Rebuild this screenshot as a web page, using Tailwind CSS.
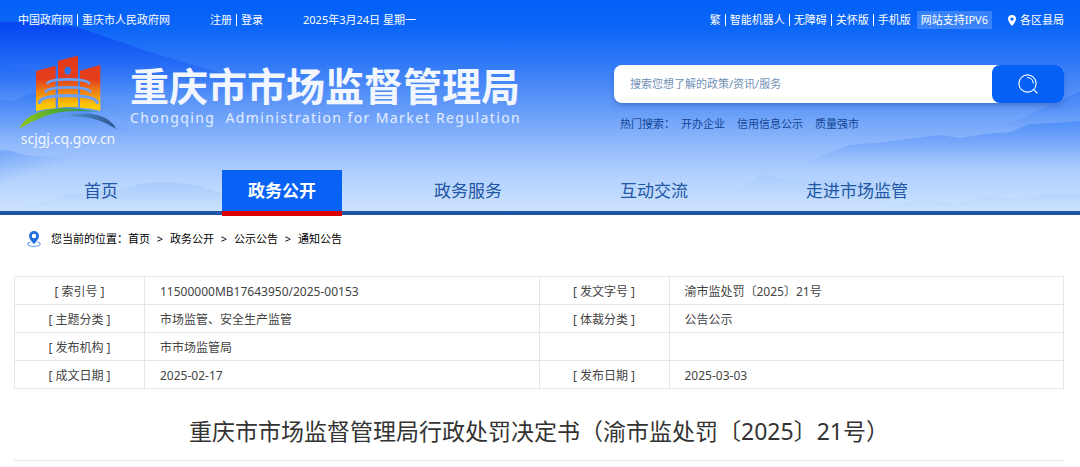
<!DOCTYPE html>
<html lang="zh-CN">
<head>
<meta charset="utf-8">
<meta name="viewport" content="width=device-width, initial-scale=1">
<title>重庆市市场监督管理局行政处罚决定书</title>
<script src="https://cdn.jsdelivr.net/npm/@tailwindcss/browser@4"></script>
</head>
<body class="bg-white font-['Noto_Sans','Noto_Sans_CJK_SC',sans-serif] text-[#333]">

<header class="relative border-b-4 border-[#1f55a5]">
  <!-- sky and mountain ridges -->
  <svg class="absolute inset-0 h-full w-full" viewBox="0 0 1080 211" preserveAspectRatio="none" aria-hidden="true">
    <defs>
      <linearGradient id="sky" x1="0" y1="0" x2="0" y2="1">
        <stop offset="0" stop-color="#005ff7"/>
        <stop offset=".14" stop-color="#0d67f7"/>
        <stop offset=".3" stop-color="#3079f6"/>
        <stop offset=".5" stop-color="#6199f8"/>
        <stop offset=".7" stop-color="#94bbfb"/>
        <stop offset=".85" stop-color="#b5d3fe"/>
        <stop offset="1" stop-color="#cde3ff"/>
      </linearGradient>
      <linearGradient id="ridgeA" x1="0" y1="22" x2="0" y2="100" gradientUnits="userSpaceOnUse">
        <stop offset="0" stop-color="#0537ee" stop-opacity=".7"/>
        <stop offset="1" stop-color="#1a62f5" stop-opacity="0"/>
      </linearGradient>
      <linearGradient id="ridgeB" x1="0" y1="64" x2="0" y2="115" gradientUnits="userSpaceOnUse">
        <stop offset="0" stop-color="#1460f5" stop-opacity=".3"/>
        <stop offset="1" stop-color="#1460f5" stop-opacity="0"/>
      </linearGradient>
      <linearGradient id="ridgeC" x1="0" y1="92" x2="0" y2="138" gradientUnits="userSpaceOnUse">
        <stop offset="0" stop-color="#1d6bf5" stop-opacity=".35"/>
        <stop offset="1" stop-color="#1d6bf5" stop-opacity="0"/>
      </linearGradient>
      <linearGradient id="ridgeD" x1="0" y1="150" x2="12" y2="182" gradientUnits="userSpaceOnUse">
        <stop offset="0" stop-color="#3d85f5" stop-opacity=".38"/>
        <stop offset="1" stop-color="#3d85f5" stop-opacity="0"/>
      </linearGradient>
      <linearGradient id="ridgeE" x1="0" y1="182" x2="0" y2="211" gradientUnits="userSpaceOnUse">
        <stop offset="0" stop-color="#5fa0f5" stop-opacity=".18"/>
        <stop offset="1" stop-color="#5fa0f5" stop-opacity="0"/>
      </linearGradient>
      <linearGradient id="ridgeF" x1="0" y1="110" x2="0" y2="164" gradientUnits="userSpaceOnUse">
        <stop offset="0" stop-color="#2e7bf7" stop-opacity=".6"/>
        <stop offset="1" stop-color="#2e7bf7" stop-opacity="0"/>
      </linearGradient>
      <linearGradient id="ridgeG" x1="0" y1="90" x2="0" y2="130" gradientUnits="userSpaceOnUse">
        <stop offset="0" stop-color="#2272f7" stop-opacity=".4"/>
        <stop offset="1" stop-color="#2272f7" stop-opacity="0"/>
      </linearGradient>
      <linearGradient id="ridgeH" x1="0" y1="168" x2="0" y2="200" gradientUnits="userSpaceOnUse">
        <stop offset="0" stop-color="#5fa0f5" stop-opacity=".12"/>
        <stop offset="1" stop-color="#5fa0f5" stop-opacity="0"/>
      </linearGradient>
    </defs>
    <rect width="1080" height="211" fill="url(#sky)"/>
    <path d="M0 22 L30 22 L55 25 L75 27 L92 32 L105 37 L118 41 L135 47 L150 52 L170 58 L190 64 L215 71 L240 79 L290 100 L0 100Z" fill="url(#ridgeA)"/>
    <path d="M0 65 L20 67 L45 74 L70 84 L100 100 L130 115 L0 115Z" fill="url(#ridgeB)"/>
    <path d="M0 100 L15 101 L27 94 L40 93 L60 100 L85 110 L110 122 L150 140 L0 140Z" fill="url(#ridgeC)"/>
    <path d="M0 150 L12 151 L25 155 L50 157 L70 156 L90 159 L110 163 L140 168 L190 185 L0 192Z" fill="url(#ridgeD)"/>
    <path d="M0 211 L28 206 L50 200 L70 194 L95 193 L120 190 L145 183 L170 182 L200 186 L240 200 L270 211Z" fill="url(#ridgeE)"/>
    <path d="M800 165 L830 152 L850 145 L885 142 L915 138 L940 135 L960 138 L985 134 L1010 132 L1030 124 L1055 123 L1080 121 L1080 165Z" fill="url(#ridgeF)"/>
    <path d="M990 130 L1020 119 L1050 105 L1068 97 L1080 91 L1080 130Z" fill="url(#ridgeG)"/>
    <path d="M720 200 L760 175 L800 180 L850 180 L880 188 L900 200Z" fill="url(#ridgeH)"/>
    <path d="M860 211 L925 199 L955 204 L985 196 L1020 199 L1050 193 L1080 195 L1080 211Z" fill="url(#ridgeE)"/>
  </svg>

  <div class="relative">
    <!-- utility bar -->
    <div class="flex h-10 items-center justify-between pr-4 pl-[18px] text-[11px] leading-4 whitespace-nowrap text-white">
      <div class="flex items-center">
        <a href="#">中国政府网</a><span class="mx-1 h-3 w-px bg-white"></span><a href="#">重庆市人民政府网</a>
        <a href="#" class="ml-10">注册</a><span class="mx-1 h-3 w-px bg-white"></span><a href="#">登录</a>
        <span class="ml-10">2025年3月24日 星期一</span>
      </div>
      <div class="flex items-center">
        <a href="#">繁</a><span class="mx-1 h-3 w-px bg-white"></span><a href="#">智能机器人</a><span class="mx-1 h-3 w-px bg-white"></span><a href="#">无障碍</a><span class="mx-1 h-3 w-px bg-white"></span><a href="#">关怀版</a><span class="mx-1 h-3 w-px bg-white"></span><a href="#">手机版</a>
        <a href="#" class="ml-1.5 rounded-[1px] bg-white/20 px-1 py-px">网站支持IPV6</a>
        <a href="#" class="ml-4 flex items-center gap-1">
          <svg class="h-[11px] w-2" viewBox="0 0 8 11" aria-hidden="true"><path fill="#fff" fill-rule="evenodd" d="M4 0a4 4 0 0 1 4 4c0 2.500-2.500 5-4 7C2.500 9 0 6.500 0 4a4 4 0 0 1 4-4Zm0 2.400a1.700 1.700 0 1 0 0 3.400a1.700 1.700 0 0 0 0-3.400Z"/></svg>
          各区县局
        </a>
      </div>
    </div>

    <!-- brand and search -->
    <div class="flex h-[130px] items-start justify-between pr-4 pl-[18px]">
      <a href="#" class="flex items-start gap-3 text-[#f2f6ff]">
        <span class="flex w-[100px] flex-col items-center pt-[15px]">
          <svg class="h-[75px] w-[98px]" viewBox="25 28 294 225" aria-hidden="true">
            <defs>
              <linearGradient id="tower" x1="0" y1="30" x2="0" y2="195" gradientUnits="userSpaceOnUse">
                <stop offset="0" stop-color="#e23a1c"/><stop offset=".42" stop-color="#e23d1c"/><stop offset=".68" stop-color="#f08a12"/><stop offset=".9" stop-color="#fcc602"/><stop offset="1" stop-color="#fdd000"/>
              </linearGradient>
              <linearGradient id="leaf" x1="25" y1="0" x2="260" y2="0" gradientUnits="userSpaceOnUse">
                <stop offset="0" stop-color="#93c51f"/><stop offset=".5" stop-color="#4fa92f"/><stop offset="1" stop-color="#2a8f6c"/>
              </linearGradient>
              <linearGradient id="river" x1="110" y1="0" x2="316" y2="0" gradientUnits="userSpaceOnUse">
                <stop offset="0" stop-color="#6fa3e8" stop-opacity="0"/><stop offset=".45" stop-color="#4a86c6"/><stop offset="1" stop-color="#2c5590"/>
              </linearGradient>
            </defs>
            <g fill="url(#tower)">
              <path d="M76 76 L135 60 V188 Q104 190 76 197Z"/>
              <path fill-rule="evenodd" d="M142 45 L202 30 V185 Q172 182 142 186Z M171 63c-13 0-13 24 0 24s13-24 0-24Z"/>
              <path d="M208 75 L269 58 V195 Q240 187 208 186Z"/>
            </g>
            <g fill="none" stroke="#6c9ff6" stroke-width="8" stroke-linecap="round">
              <path d="M111 113 Q116 101 172 101 Q228 101 235 113"/>
              <path d="M105 138 Q114 125 172 125 Q230 125 239 138"/>
              <path d="M86 171 Q90 150 172 150 Q252 150 260 171" stroke-width="10"/>
            </g>
            <path d="M26 249 Q40 216 80 201 Q150 175 262 200 Q150 187 88 218 Q54 232 26 249Z" fill="url(#leaf)"/>
            <path d="M110 217 Q180 200 240 204 Q300 213 316 250 Q270 219 215 214 Q160 210 110 217Z" fill="url(#river)"/>
          </svg>
          <span class="text-sm leading-[18px]">scjgj.cq.gov.cn</span>
        </span>
        <span class="flex flex-col gap-0.5 pt-6">
          <span class="text-[39px] leading-[44px] font-bold whitespace-nowrap">重庆市市场监督管理局</span>
          <span class="text-sm leading-4 tracking-widest whitespace-pre text-[#e3edff]">Chongqing  Administration for Market Regulation</span>
        </span>
      </a>

      <div class="w-[450px] pt-[25px] text-[11px]">
        <form class="flex h-[38px] rounded-lg bg-white shadow-md shadow-blue-900/25" role="search">
          <input type="text" aria-label="搜索" placeholder="搜索您想了解的政策/资讯/服务" class="min-w-0 flex-1 rounded-l-lg px-4 outline-none placeholder:text-[#6f8fb5]">
          <button type="submit" aria-label="搜索" class="flex w-[72px] items-center justify-center rounded-lg bg-[#0560f5]">
            <svg class="h-5 w-5" viewBox="0 0 20 20" fill="none" stroke="#fff" stroke-width="1.100" stroke-linecap="round" aria-hidden="true"><circle cx="9.500" cy="9.500" r="8.600"/><path d="M9.500 3.500a6 6 0 0 1 5.700 5.500M15.700 15.700 19 19"/></svg>
          </button>
        </form>
        <div class="flex items-center gap-3 pt-[13px] pl-1.5 leading-4 whitespace-nowrap text-[#124696]">
          <span class="-mr-1.5">热门搜索：</span>
          <a href="#">开办企业</a>
          <a href="#">信用信息公示</a>
          <a href="#">质量强市</a>
        </div>
      </div>
    </div>

    <!-- main navigation -->
    <nav class="flex h-[41px] items-start gap-[66px] pl-[46px] text-[17px] leading-10 whitespace-nowrap text-[#2257a3]">
      <a href="#" class="w-[110px] pt-px text-center">首页</a>
      <a href="#" aria-current="page" class="border-b-[5px] border-[#dc0000] bg-[#0862f5] px-[26px] pt-px font-bold text-white">政务公开</a>
      <a href="#" class="px-[26px] pt-px">政务服务</a>
      <a href="#" class="px-[26px] pt-px">互动交流</a>
      <a href="#" class="px-[26px] pt-px">走进市场监管</a>
    </nav>
  </div>
</header>

<main class="pr-4 pl-[14px]">
  <nav aria-label="位置" class="flex h-[61px] items-start pt-4 pl-[13px] text-[11px] leading-4 whitespace-nowrap text-black">
    <svg class="mr-2.5 h-4 w-[14px]" viewBox="0 0 14 16" aria-hidden="true">
      <path d="M3.500 10.800C1.800 11.300.700 12 .700 13c0 1.400 2.800 2.400 6.300 2.400s6.300-1 6.300-2.400c0-1-1.100-1.700-2.800-2.200" fill="none" stroke="#6fa4ee" stroke-width="1.200"/>
      <path fill="#1f6fe0" fill-rule="evenodd" d="M7 0a5 5 0 0 1 5 5c0 3-3 5.500-5 8.300C5 10.500 2 8 2 5a5 5 0 0 1 5-5Zm0 2.800a2.200 2.200 0 1 0 0 4.400a2.200 2.200 0 0 0 0-4.400Z"/>
    </svg>
    <span>您当前的位置：</span><a href="#">首页</a>
    <span class="w-5 text-center">&gt;</span><a href="#">政务公开</a>
    <span class="w-5 text-center">&gt;</span><a href="#">公示公告</a>
    <span class="w-5 text-center">&gt;</span><a href="#">通知公告</a>
  </nav>

  <table class="w-full table-fixed border-collapse text-xs leading-[25px] text-[#444] [&_td]:border [&_td]:border-[#e6e6e6] [&_td]:px-[15px] [&_td]:pt-0.5 [&_th]:border [&_th]:border-[#e6e6e6] [&_th]:pt-0.5 [&_th]:font-normal">
    <colgroup><col class="w-[130px]"><col><col class="w-[130px]"><col></colgroup>
    <tbody>
      <tr><th scope="row">[ 索引号 ]</th><td>11500000MB17643950/2025-00153</td><th scope="row">[ 发文字号 ]</th><td>渝市监处罚〔2025〕21号</td></tr>
      <tr><th scope="row">[ 主题分类 ]</th><td>市场监管、安全生产监管</td><th scope="row">[ 体裁分类 ]</th><td>公告公示</td></tr>
      <tr><th scope="row">[ 发布机构 ]</th><td>市市场监管局</td><td></td><td></td></tr>
      <tr><th scope="row">[ 成文日期 ]</th><td>2025-02-17</td><th scope="row">[ 发布日期 ]</th><td>2025-03-03</td></tr>
    </tbody>
  </table>

  <h1 class="border-b border-[#e6e6e6] pt-[26px] pb-[13px] text-center text-[23px] leading-8 text-[#333]">重庆市市场监督管理局行政处罚决定书（渝市监处罚〔2025〕21号）</h1>
</main>
</body>
</html>
